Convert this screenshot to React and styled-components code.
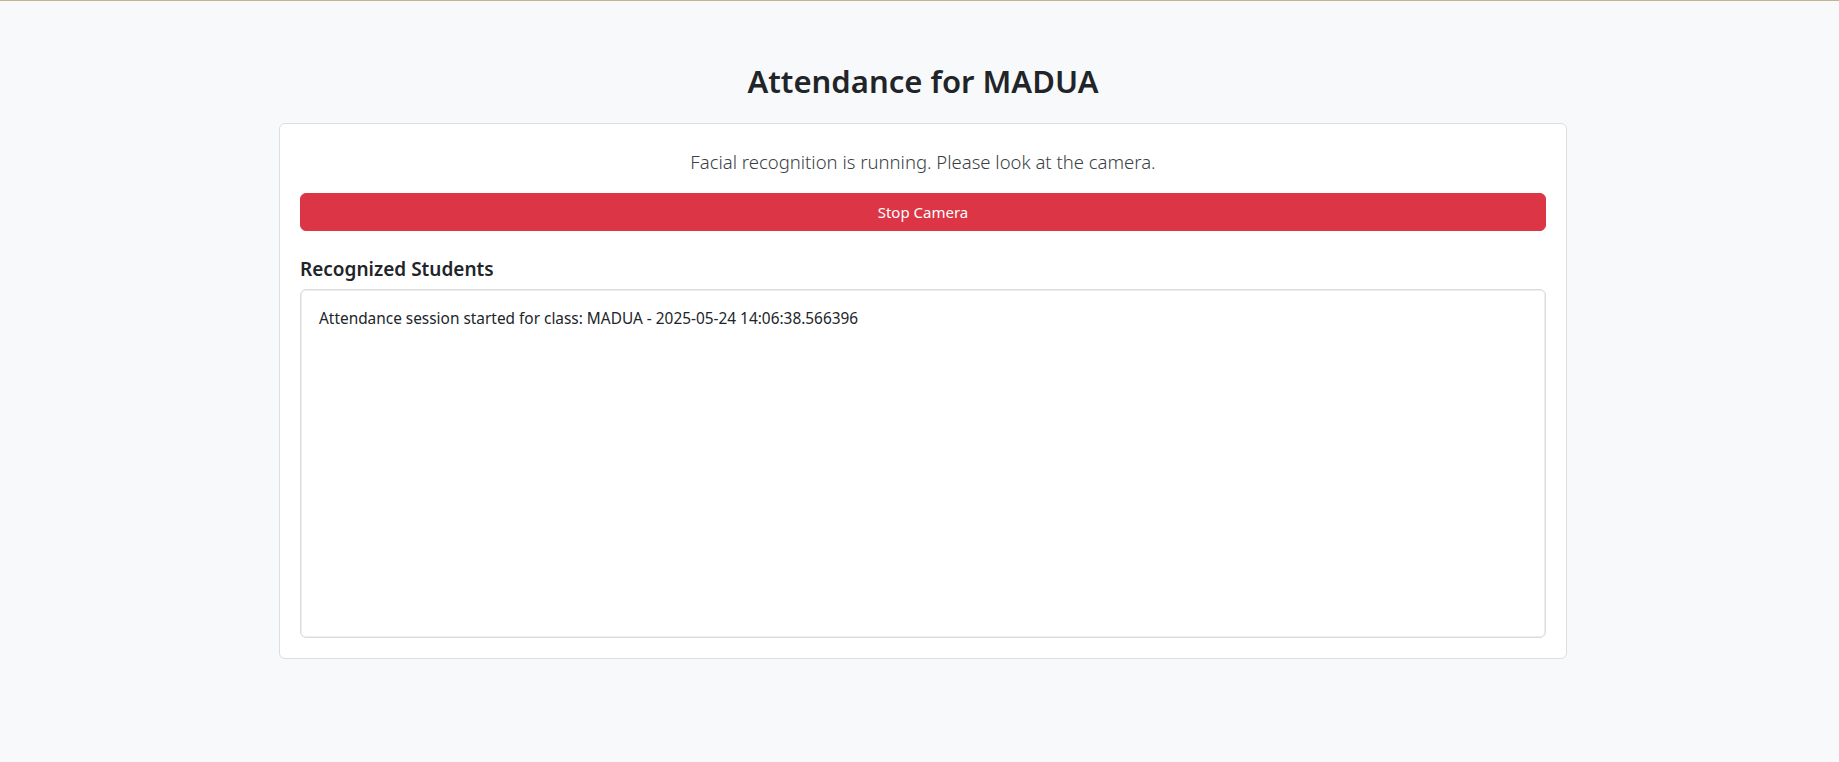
import React from 'react'
import styled, { createGlobalStyle } from 'styled-components';

const GlobalStyle = createGlobalStyle`
    html, body {
        margin: 0;
        padding: 0;
        background: #f8f9fa;
    }
    body {
        border-top: 1px solid #c3b48f;
        min-height: 761px;
        font-family: "Noto Sans", "Open Sans", sans-serif;
        color: #212529;
    }
    * {
        box-sizing: border-box;
    }
`

const logLines = [
    'Attendance session started for class: MADUA - 2025-05-24 14:06:38.566396',
]

function App() {
    return (
        <>
            <GlobalStyle />
            <Page>
                <Container>
                    <Title>Attendance for MADUA</Title>
                    <Card>
                        <Lead>Facial recognition is running. Please look at the camera.</Lead>
                        <StopButton type="button">Stop Camera</StopButton>
                        <SectionTitle>Recognized Students</SectionTitle>
                        <LogBox>
                            {logLines.map((line) => (
                                <LogLine key={line}>{line}</LogLine>
                            ))}
                        </LogBox>
                    </Card>
                </Container>
            </Page>
        </>
    )
}

export default App

const Page = styled.div`
    padding: 62px 0 0 7px;
`
const Container = styled.div`
    max-width: 1288px;
    margin: 0 auto;
`
const Title = styled.h2`
    margin: 0 0 23px;
    text-align: center;
    font-size: 31px;
    font-weight: 600;
    line-height: 1.2;
    color: #212529;
`
const Card = styled.div`
    display: flex;
    flex-direction: column;
    background: #fff;
    border: 1px solid #dcdee0;
    border-radius: 6px;
    padding: 20px;
`
const Lead = styled.p`
    margin: 4px 0 17px;
    text-align: center;
    font-size: 18.5px;
    font-weight: 300;
    line-height: 1.5;
    color: #3a3f45;
`
const StopButton = styled.button`
    height: 38px;
    width: 100%;
    border: 1px solid #dc3545;
    border-radius: 6px;
    background: #dc3545;
    color: #fff;
    font-family: inherit;
    font-size: 15px;
    line-height: 1.5;
    cursor: pointer;
`
const SectionTitle = styled.h5`
    margin: 27px 0 8px;
    font-size: 19px;
    font-weight: 600;
    line-height: 1.2;
    color: #212529;
`
const LogBox = styled.div`
    height: 349px;
    border: 1px solid #d9dcdf;
    border-radius: 6px;
    padding: 17px 18px;
    overflow-y: auto;
    box-shadow: inset 0 0 0 1px #eceef0;
`
const LogLine = styled.div`
    font-size: 15.4px;
    line-height: 1.5;
    color: #212529;
`
